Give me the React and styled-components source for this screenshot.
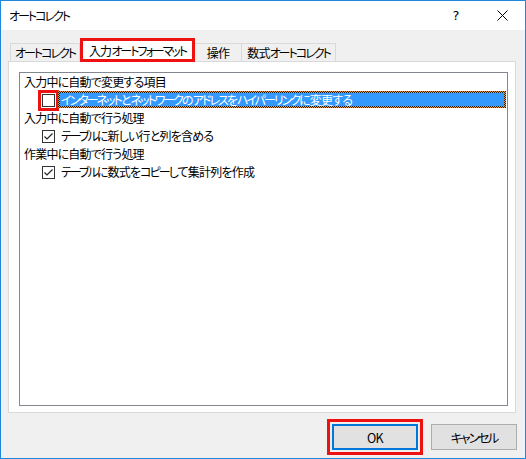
import React from 'react'
import styled, { createGlobalStyle } from 'styled-components'

const GlobalStyle = createGlobalStyle`
  html, body {
    margin: 0;
    padding: 0;
    background: #f0f0f0;
  }
  body {
    font-family: "Noto Sans CJK JP", "Noto Sans", sans-serif;
    font-size: 12px;
    font-feature-settings: "palt";
    letter-spacing: -0.8px;
    color: #000;
  }
`

// katakana in the dialog font is much narrower than in Noto, so squeeze those runs
const Kana = styled.span`
  letter-spacing: -2px;
`

const jp = text =>
  text.split(/([\u30A0-\u30FF]+)/).map((part, i) =>
    /[\u30A0-\u30FF]/.test(part) ? <Kana key={i}>{part}</Kana> : part
  )

const Window = styled.div`
  width: 526px;
  height: 459px;
  box-sizing: border-box;
  border: 1px solid #1c87dd;
  background: #f0f0f0;
  display: flex;
  flex-direction: column;
`

const TitleBar = styled.div`
  height: 29px;
  flex: none;
  background: #fff;
  display: flex;
  align-items: center;
  padding-left: 8px;
`

const Title = styled.div`
  flex: 1;
  line-height: 29px;
  white-space: nowrap;
`

const CaptionButton = styled.div`
  width: 46px;
  height: 29px;
  display: flex;
  align-items: center;
  justify-content: center;
  font-family: "DejaVu Sans", sans-serif;
  font-size: 13px;
  letter-spacing: 0;
`

const Body = styled.div`
  flex: 1;
  display: flex;
  flex-direction: column;
  padding: 8px 9px 0 7px;
`

const TabStrip = styled.div`
  height: 23px;
  display: flex;
  align-items: flex-end;
  padding-left: 2px;
`

const Tab = styled.div`
  box-sizing: border-box;
  width: ${p => p.$w}px;
  height: 18px;
  border: 1px solid #d9d9d9;
  border-bottom: none;
  border-left-width: ${p => (p.$noLeft ? 0 : 1)}px;
  background: #f0f0f0;
  display: flex;
  align-items: center;
  justify-content: center;
  white-space: nowrap;
  line-height: 1;
  padding-top: 1px;
`

const ActiveTab = styled.div`
  box-sizing: border-box;
  width: 115px;
  height: 24px;
  margin-bottom: -1px;
  border: 3px solid #ee1111;
  background: #fff;
  position: relative;
  z-index: 1;
  display: flex;
  align-items: center;
  justify-content: center;
  white-space: nowrap;
`

const Panel = styled.div`
  box-sizing: border-box;
  height: 352px;
  border: 1px solid #d9d9d9;
  background: #fff;
  padding: 10px 7px 6px 10px;
`

const ListBox = styled.div`
  box-sizing: border-box;
  height: 334px;
  border: 1px solid #828790;
  background: #fff;
  display: flex;
  flex-direction: column;
`

const GroupHeader = styled.div`
  height: 18px;
  line-height: 18px;
  padding-left: 4px;
  white-space: nowrap;
`

const OptionRow = styled.div`
  height: 18px;
  display: flex;
  align-items: flex-start;
  padding-left: 22px;
`

const CheckBox = styled.div`
  box-sizing: border-box;
  width: 13px;
  height: 13px;
  margin-top: 3px;
  flex: none;
  border: 1px solid #333;
  background: #fff;
  display: flex;
  align-items: center;
  justify-content: center;
  outline: ${p => (p.$marked ? '3px solid #ee1111' : 'none')};
  outline-offset: 1px;
`

const OptionLabel = styled.div`
  box-sizing: border-box;
  height: 17px;
  margin-left: 3px;
  padding-left: 1px;
  line-height: 13px;
  border: 2px solid transparent;
  white-space: nowrap;
  ${p =>
    p.$selected &&
    `
    flex: 1;
    margin-right: 1px;
    color: #fff;
    background: linear-gradient(#3399ff, #3399ff) padding-box,
      repeating-conic-gradient(#1a1a1a 0 25%, #f0a030 0 50%) 0 0 / 2px 2px border-box;
  `}
`

const ButtonRow = styled.div`
  display: flex;
  justify-content: flex-end;
  gap: 13px;
  padding: 11px 0 8px;
  margin-right: -1px;
`

const DialogButton = styled.div`
  box-sizing: border-box;
  width: 86px;
  height: 26px;
  background: #e1e1e1;
  border: ${p => (p.$default ? '2px solid #0078d7' : '1px solid #adadad')};
  display: flex;
  align-items: center;
  justify-content: center;
  outline: ${p => (p.$marked ? '3px solid #ee1111' : 'none')};
  outline-offset: 2px;
  font-size: 12.5px;
`

const CheckMark = () => (
  <svg width="11" height="11" viewBox="0 0 11 11">
    <polyline points="1.5,5.5 4,8 9.5,2.5" fill="none" stroke="#222" strokeWidth="1.2" />
  </svg>
)

const CloseIcon = () => (
  <svg width="11" height="11" viewBox="0 0 11 11">
    <path d="M0.5 0.5 L10.5 10.5 M10.5 0.5 L0.5 10.5" stroke="#000" strokeWidth="1" fill="none" />
  </svg>
)

const Option = ({ checked, selected, marked, text }) => (
  <OptionRow>
    <CheckBox $marked={marked}>{checked && <CheckMark />}</CheckBox>
    <OptionLabel $selected={selected}>{jp(text)}</OptionLabel>
  </OptionRow>
)

export default function App() {
  return (
    <>
      <GlobalStyle />
      <Window>
        <TitleBar>
          <Title>{jp('オートコレクト')}</Title>
          <CaptionButton>?</CaptionButton>
          <CaptionButton>
            <CloseIcon />
          </CaptionButton>
        </TitleBar>
        <Body>
          <TabStrip>
            <Tab $w={70}>{jp('オートコレクト')}</Tab>
            <ActiveTab>{jp('入力オートフォーマット')}</ActiveTab>
            <Tab $w={47} $noLeft>操作</Tab>
            <Tab $w={94} $noLeft>{jp('数式オートコレクト')}</Tab>
          </TabStrip>
          <Panel>
            <ListBox>
              <GroupHeader>入力中に自動で変更する項目</GroupHeader>
              <Option
                selected
                marked
                text="インターネットとネットワークのアドレスをハイパーリンクに変更する"
              />
              <GroupHeader>入力中に自動で行う処理</GroupHeader>
              <Option checked text="テーブルに新しい行と列を含める" />
              <GroupHeader>作業中に自動で行う処理</GroupHeader>
              <Option checked text="テーブルに数式をコピーして集計列を作成" />
            </ListBox>
          </Panel>
          <ButtonRow>
            <DialogButton $default $marked>OK</DialogButton>
            <DialogButton>{jp('キャンセル')}</DialogButton>
          </ButtonRow>
        </Body>
      </Window>
    </>
  )
}
